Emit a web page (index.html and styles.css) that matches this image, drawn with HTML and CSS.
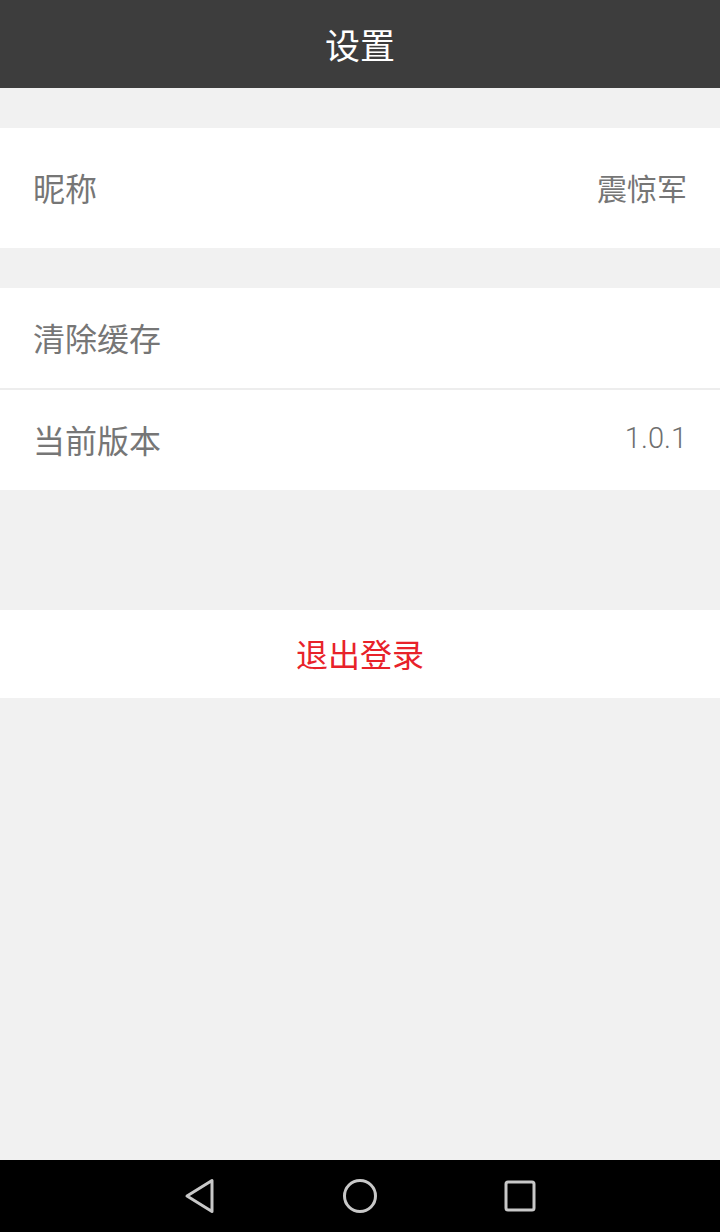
FILE: index.html
```html
<!DOCTYPE html>
<html lang="zh">
<head>
<meta charset="utf-8">
<link rel="stylesheet" href="styles.css">
</head>
<body>
<div class="screen">
  <header class="topbar">设置</header>
  <main class="content">
    <section class="group">
      <div class="row tall"><span class="label">昵称</span><span class="value cjk">震惊军</span></div>
    </section>
    <section class="group">
      <div class="row"><span class="label">清除缓存</span></div>
      <div class="divider"></div>
      <div class="row"><span class="label">当前版本</span><span class="value num">1.0.1</span></div>
    </section>
    <section class="group logout-group">
      <div class="logout">退出登录</div>
    </section>
  </main>
  <nav class="navbar">
    <svg class="nav-icon" width="40" height="40" viewBox="0 0 40 40"><path d="M32 4.5 L32 35.5 L7 20 Z" fill="none" stroke="#c8c8c8" stroke-width="3" stroke-linejoin="round"/></svg>
    <svg class="nav-icon" width="40" height="40" viewBox="0 0 40 40"><circle cx="20" cy="20" r="15.5" fill="none" stroke="#c8c8c8" stroke-width="3"/></svg>
    <svg class="nav-icon" width="40" height="40" viewBox="0 0 40 40"><rect x="6" y="6" width="28" height="28" rx="2" fill="none" stroke="#c8c8c8" stroke-width="3"/></svg>
  </nav>
</div>
</body>
</html>
```
FILE: styles.css
```css
* { box-sizing: border-box; }
html, body { margin: 0; padding: 0; }
body {
  font-family: "Noto Sans CJK SC", "Roboto", sans-serif;
  background: #f1f1f1;
}
.screen {
  width: 720px;
  height: 1232px;
  display: flex;
  flex-direction: column;
}
.topbar {
  height: 88px;
  background: #3d3d3d;
  color: #ffffff;
  font-size: 35px;
  line-height: 1;
  display: flex;
  align-items: center;
  justify-content: center;
  padding-bottom: 2px;
}
.content {
  flex: 1;
  display: flex;
  flex-direction: column;
  padding-top: 40px;
}
.group {
  background: #ffffff;
  margin-bottom: 40px;
}
.row {
  height: 100px;
  display: flex;
  align-items: center;
  justify-content: space-between;
  padding: 0 33px 3px 33px;
  font-size: 32px;
  line-height: 1;
  color: #767676;
}
.row.tall { height: 120px; }
.value.cjk { font-size: 30px; }
.value.num {
  font-family: "Roboto", sans-serif;
  font-weight: 300;
  font-size: 29px;
  color: #6f6f6f;
}
.divider {
  height: 2px;
  background: #ededed;
}
.logout-group { margin-top: 80px; }
.logout {
  height: 88px;
  display: flex;
  align-items: center;
  justify-content: center;
  font-size: 32px;
  line-height: 1;
  padding-bottom: 3px;
  color: #e8222a;
}
.navbar {
  height: 72px;
  background: #000000;
  display: flex;
  align-items: center;
  justify-content: center;
  gap: 120px;
}
.nav-icon { display: block; }
```
